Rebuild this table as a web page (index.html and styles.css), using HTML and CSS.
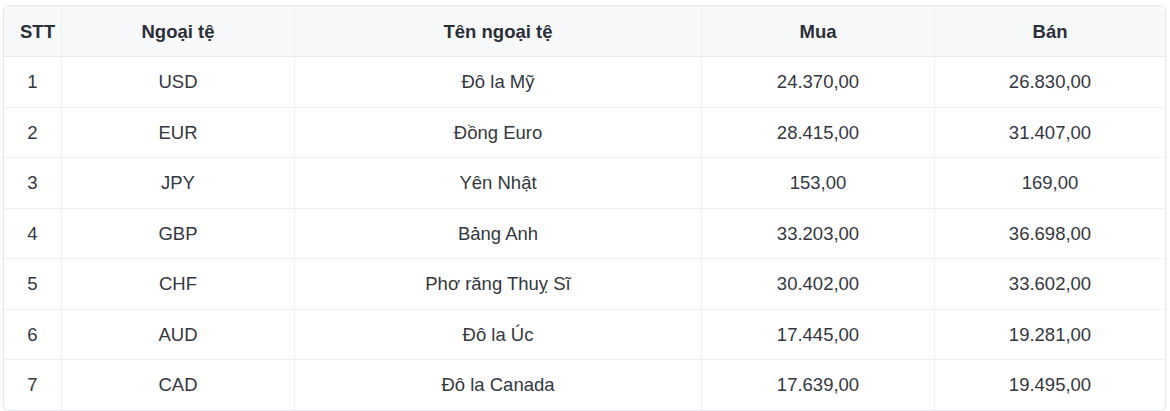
FILE: index.html
```html
<!DOCTYPE html>
<html lang="vi">
<head>
<meta charset="utf-8">
<title>Tỷ giá ngoại tệ</title>
<link rel="stylesheet" href="styles.css">
</head>
<body>
<div class="wrap">
  <table class="rates">
    <colgroup>
      <col class="c-stt"><col class="c-code"><col class="c-name"><col class="c-buy"><col class="c-sell">
    </colgroup>
    <thead>
      <tr><th>STT</th><th>Ngoại tệ</th><th>Tên ngoại tệ</th><th>Mua</th><th>Bán</th></tr>
    </thead>
    <tbody>
      <tr><td>1</td><td>USD</td><td>Đô la Mỹ</td><td>24.370,00</td><td>26.830,00</td></tr>
      <tr><td>2</td><td>EUR</td><td>Đồng Euro</td><td>28.415,00</td><td>31.407,00</td></tr>
      <tr><td>3</td><td>JPY</td><td>Yên Nhật</td><td>153,00</td><td>169,00</td></tr>
      <tr><td>4</td><td>GBP</td><td>Bảng Anh</td><td>33.203,00</td><td>36.698,00</td></tr>
      <tr><td>5</td><td>CHF</td><td>Phơ răng Thuỵ Sĩ</td><td>30.402,00</td><td>33.602,00</td></tr>
      <tr><td>6</td><td>AUD</td><td>Đô la Úc</td><td>17.445,00</td><td>19.281,00</td></tr>
      <tr><td>7</td><td>CAD</td><td>Đô la Canada</td><td>17.639,00</td><td>19.495,00</td></tr>
    </tbody>
  </table>
</div>
</body>
</html>
```
FILE: styles.css
```css
html, body {
  margin: 0;
  padding: 0;
  background: #ffffff;
}
body {
  font-family: "Liberation Sans", Arial, sans-serif;
}
.wrap {
  padding: 5px 4px 0 3px;
}
.rates {
  width: 1163px;
  table-layout: fixed;
  border-collapse: separate;
  border-spacing: 0;
  border: 1px solid #e3e6ea;
  border-radius: 6px;
  box-shadow: 0 1px 2px rgba(0, 0, 0, 0.05);
  overflow: hidden;
  font-size: 18.5px;
}
.c-stt { width: 58px; }
.c-code { width: 233px; }
.c-name { width: 407px; }
.c-buy { width: 233px; }
.c-sell { width: 230px; }
.rates th,
.rates td {
  padding: 0 16px;
  text-align: center;
  white-space: nowrap;
  line-height: 21px;
  border-right: 1px solid #eef0f3;
  border-bottom: 1px solid #eef0f3;
}
.rates th:last-child,
.rates td:last-child {
  border-right: none;
}
.rates tbody tr:last-child td {
  border-bottom: none;
}
.rates th {
  height: 50px;
  background: #f7f8fa;
  color: #2b2f38;
  font-weight: bold;
  border-bottom-color: #e8eaee;
}
.rates td {
  height: 49.5px;
  color: #343740;
  font-weight: normal;
}
```
